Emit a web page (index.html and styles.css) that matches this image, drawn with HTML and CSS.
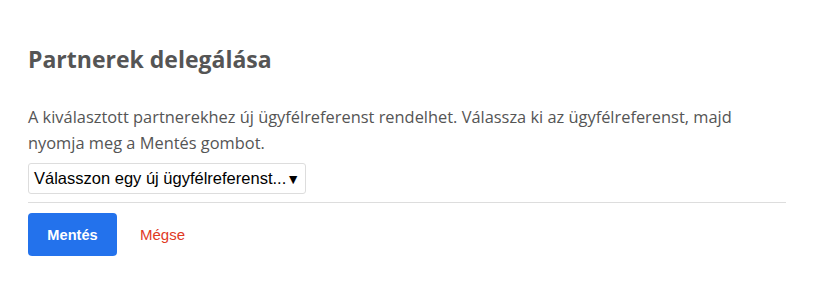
FILE: index.html
```html
<!DOCTYPE html>
<html lang="hu">
<head>
<meta charset="utf-8">
<link rel="stylesheet" href="styles.css">
</head>
<body>
<div class="panel">
  <h1 class="title">Partnerek delegálása</h1>
  <p class="desc">A kiválasztott partnerekhez új ügyfélreferenst rendelhet. Válassza ki az ügyfélreferenst, majd nyomja meg a Mentés gombot.</p>
  <div class="select">
    <span class="select-label">Válasszon egy új ügyfélreferenst...</span>
    <span class="select-arrow">▼</span>
  </div>
  <div class="divider"></div>
  <div class="actions">
    <button class="btn-primary">Mentés</button>
    <button class="btn-link">Mégse</button>
  </div>
</div>
</body>
</html>
```
FILE: styles.css
```css
html, body {
  margin: 0;
  padding: 0;
  background: #fff;
}
.panel {
  padding: 42px 29px 0 28px;
  font-family: "Open Sans", "Noto Sans", sans-serif;
  color: #555;
}
.title {
  margin: 0;
  font-size: 23px;
  font-weight: 700;
  line-height: 34px;
  color: #555;
}
.desc {
  margin: 28px 0 0;
  font-size: 16.4px;
  line-height: 26px;
  color: #555;
}
.select {
  display: inline-flex;
  align-items: center;
  margin-top: 7px;
  height: 29px;
  padding: 0 5px 0 5px;
  border: 1px solid #ddd;
  border-radius: 3px;
  font-family: "Liberation Sans", Arial, sans-serif;
  font-size: 16.5px;
  color: #000;
}
.select-arrow {
  font-size: 14px;
  margin-left: 0;
}
.divider {
  height: 1px;
  background: #ddd;
  margin-top: 8px;
}
.actions {
  display: flex;
  align-items: center;
  margin-top: 10px;
}
.btn-primary {
  width: 89px;
  height: 43px;
  border: none;
  border-radius: 4px;
  background: #2372ec;
  color: #fff;
  font-family: "Liberation Sans", Arial, sans-serif;
  font-weight: 700;
  font-size: 14.6px;
}
.btn-link {
  margin-left: 23px;
  border: none;
  background: none;
  padding: 0;
  color: #e0391f;
  font-family: "Liberation Sans", Arial, sans-serif;
  font-size: 15px;
}
```
